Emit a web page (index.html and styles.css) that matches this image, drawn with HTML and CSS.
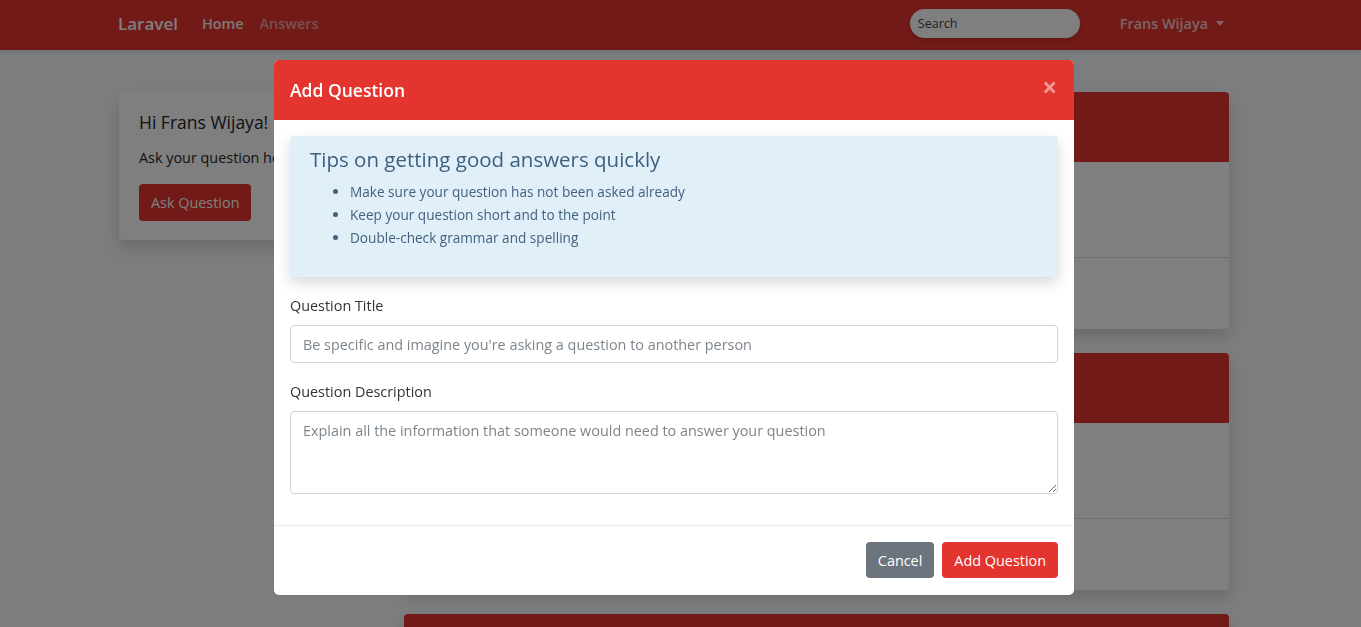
FILE: index.html
```html
<!DOCTYPE html>
<html>
<head>
<meta charset="utf-8">
<link rel="stylesheet" href="styles.css">
</head>
<body>
<nav class="navbar">
  <div class="nav-inner">
    <a class="brand">Laravel</a>
    <ul class="nav-links">
      <li class="active">Home</li>
      <li>Answers</li>
    </ul>
    <div class="spacer"></div>
    <input class="search" type="text" placeholder="Search">
    <div class="user">Frans Wijaya <span class="caret"></span></div>
  </div>
</nav>
<main class="container">
  <aside class="col-left">
    <div class="card welcome">
      <h4>Hi Frans Wijaya!</h4>
      <p>Ask your question here</p>
      <button class="btn btn-red">Ask Question</button>
    </div>
  </aside>
  <section class="col-right">
    <div class="card qcard">
      <div class="qhead"></div>
      <div class="qbody"></div>
      <div class="qfoot"></div>
    </div>
    <div class="card qcard">
      <div class="qhead"></div>
      <div class="qbody"></div>
      <div class="qfoot"></div>
    </div>
    <div class="card qcard">
      <div class="qhead"></div>
      <div class="qbody"></div>
      <div class="qfoot"></div>
    </div>
  </section>
</main>

<div class="backdrop"></div>
<div class="modal-wrap">
  <div class="modal">
    <div class="modal-header">
      <h5>Add Question</h5>
      <span class="close">&times;</span>
    </div>
    <div class="modal-body">
      <div class="tips">
        <h4>Tips on getting good answers quickly</h4>
        <ul>
          <li>Make sure your question has not been asked already</li>
          <li>Keep your question short and to the point</li>
          <li>Double-check grammar and spelling</li>
        </ul>
      </div>
      <div class="group">
        <label>Question Title</label>
        <input class="control" type="text" placeholder="Be specific and imagine you're asking a question to another person">
      </div>
      <div class="group">
        <label>Question Description</label>
        <textarea class="control area" placeholder="Explain all the information that someone would need to answer your question"></textarea>
      </div>
    </div>
    <div class="modal-footer">
      <button class="btn btn-gray">Cancel</button>
      <button class="btn btn-red">Add Question</button>
    </div>
  </div>
</div>
</body>
</html>
```

FILE: styles.css
```css
* { box-sizing: border-box; }
html, body { margin: 0; height: 100%; }
body {
  background: #f8fafc;
  font-family: "Open Sans", "Noto Sans", sans-serif;
  font-size: 14.4px;
  color: #212529;
  overflow: hidden;
}
.navbar {
  background: #e3342f;
  height: 50px;
  box-shadow: 0 2px 4px rgba(0,0,0,.08);
}
.nav-inner {
  display: flex;
  align-items: center;
  height: 100%;
  padding-left: 118px;
  padding-right: 137px;
  padding-bottom: 4px;
}
.brand {
  color: #fff;
  font-size: 17px;
  font-weight: 600;
  margin-right: 24px;
}
.nav-links {
  list-style: none;
  display: flex;
  gap: 16px;
  margin: 0;
  padding: 0;
  font-weight: 600;
  font-size: 14.4px;
  color: rgba(255,255,255,.55);
}
.nav-links .active { color: rgba(255,255,255,.95); }
.spacer { flex: 1; }
.search {
  width: 170px;
  height: 29px;
  border-radius: 15px;
  border: none;
  background: #fff;
  padding: 0 8px;
  font-family: inherit;
  font-size: 12.5px;
  box-shadow: 0 2px 4px rgba(0,0,0,.15);
  margin-right: 40px;
}
.search::placeholder { color: #444; }
.user {
  color: rgba(255,255,255,.75);
  font-weight: 600;
  font-size: 14.4px;
  display: flex;
  align-items: center;
}
.caret {
  display: inline-block;
  margin-left: 8px;
  border-top: 5px solid rgba(255,255,255,.75);
  border-left: 4.5px solid transparent;
  border-right: 4.5px solid transparent;
}
.container {
  display: flex;
  gap: 30px;
  margin-left: 119px;
  width: 1110px;
  padding-top: 42px;
}
.col-left { width: 255px; flex: none; }
.col-right { width: 825px; flex: none; display: flex; flex-direction: column; gap: 24px; }
.card {
  background: #fff;
  border-radius: 4px;
  box-shadow: 0 8px 16px rgba(0,0,0,.15);
  overflow: hidden;
}
.welcome { padding: 18px 20px 20px; height: 148px; }
.welcome h4 { margin: 0 0 14px; font-weight: 400; font-size: 17.5px; }
.welcome p { margin: 0 0 17px; }
.qhead { height: 70px; background: #e3342f; }
.qbody { height: 96px; border-bottom: 1px solid #ddd; }
.qfoot { height: 71px; }

.btn {
  font-family: inherit;
  font-size: 14.4px;
  color: #fff;
  border: none;
  border-radius: 4px;
  padding: 0 12px;
  height: 36px;
  font-weight: 500;
}
.welcome .btn { height: 37px; }
.btn-red { background: #e3342f; }
.btn-gray { background: #6c757d; }

.backdrop {
  position: fixed;
  inset: 0;
  background: rgba(0,0,0,.5);
}
.modal-wrap {
  position: fixed;
  inset: 0;
  padding-top: 60px;
  padding-left: 274px;
}
.modal {
  width: 800px;
  background: #fff;
  border-radius: 5px;
  overflow: hidden;
}
.modal-header {
  background: #e3342f;
  height: 60px;
  display: flex;
  align-items: center;
  justify-content: space-between;
  padding: 0 16px;
}
.modal-header h5 {
  margin: 0;
  color: #fff;
  font-size: 17.5px;
  font-weight: 600;
}
.close {
  color: rgba(255,255,255,.5);
  font-size: 26px;
  font-weight: 700;
  line-height: 1;
  margin-top: -6px;
  margin-right: 1px;
}
.modal-body { padding: 16px; }
.tips {
  background: #e1eff9;
  border-radius: 4px;
  box-shadow: 0 6px 14px rgba(0,0,0,.15);
  padding: 10px 20px 22px;
  height: 141px;
  color: #43627f;
}
.tips h4 {
  margin: -1px 0 7px;
  font-weight: 400;
  font-size: 20.5px;
  color: #3d5f80;
}
.tips ul {
  margin: 0;
  padding-left: 40px;
  font-size: 13.6px;
  line-height: 23px;
}
.group { margin-top: 19px; }
.group label {
  display: block;
  margin-bottom: 10px;
  color: #333;
}
.control {
  display: block;
  width: 100%;
  height: 38px;
  border: 1px solid #ced4da;
  border-radius: 4px;
  padding: 6px 12px;
  font-family: inherit;
  font-size: 14.4px;
  color: #495057;
}
.control::placeholder { color: #7d858c; }
.area { height: 83px; resize: vertical; padding-top: 9px; }
.modal-footer {
  border-top: 1px solid #e9ecef;
  margin-top: 15px;
  padding: 16px 16px 17px;
  display: flex;
  justify-content: flex-end;
  gap: 8px;
}
```
